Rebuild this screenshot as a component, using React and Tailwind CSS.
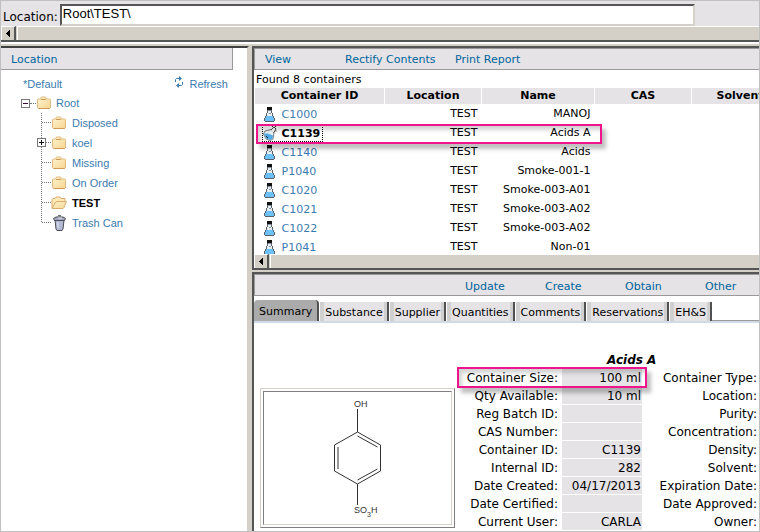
import React from "react";

const VERDANA = "font-['DejaVu_Sans',sans-serif]";

function Flask() {
  return (
    <svg width="12" height="15" viewBox="0 0 12 15" shapeRendering="crispEdges" aria-hidden="true" className="shrink-0">
      <path d="M3 0h5v3h-5z" fill="#111" />
      <path d="M4 3h3v4h1v2h1v2h-7v-2h1v-2h1z" fill="#e4eef4" />
      <path d="M2 9h7v2h1v3h-9v-3h1z" fill="#6cc1fa" />
      <path d="M3 3h1v3h-1zM7 3h1v3h-1zM2 6h1v3h-1zM8 6h1v3h-1zM1 9h1v2h-1zM9 9h1v2h-1zM0 11h1v3h-1zM10 11h1v3h-1zM1 14h9v1h-9z" fill="#5b6068" />
      <path d="M4 3h3v1h-3zM5 6h2v1h-2z" fill="#8a949c" />
    </svg>
  );
}

function OpenFlask() {
  return (
    <svg width="14" height="15" viewBox="0 0 14 15" aria-hidden="true" className="shrink-0">
      <path d="M8 3.500 2 5 .5 8 3 13l4 1.500 3-1.500 1-6z" fill="#e8f0f4" stroke="#777" />
      <path d="M1 7.500h4l5 2-.5 3L7 14l-4-1.500z" fill="#50ace8" />
      <path d="m8 4 3-3 2 2-2.500 4" fill="#fff" stroke="#444" />
      <path d="m9 1 1-1M12 .5h1M13 4.500v1M5 12l-2-2" stroke="#222" />
    </svg>
  );
}

function Folder({ open }) {
  return (
    <svg width="16" height="14" viewBox="0 0 16 14" aria-hidden="true" className="shrink-0">
      <defs>
        <linearGradient id="folderFill" x2="1" y2="1">
          <stop offset="0" stopColor="#fff4cf" />
          <stop offset="1" stopColor="#f6d592" />
        </linearGradient>
      </defs>
      {open ? (
        <>
          <path d="M1 12V3.500l1-1h2l1-1.500h4l1 1.500h4v3.500" fill="#ffe9b6" stroke="#d9ad70" />
          <path d="M1 12.500 4 7l2-1.500h9.500l-2.500 6-1 1z" fill="url(#folderFill)" stroke="#d9ad70" />
        </>
      ) : (
        <>
          <path d="M1.500 11.500v-8l1-.5h2l1-2h4l1 2h3l1 .5v8l-1 1h-11z" fill="url(#folderFill)" stroke="#dfb981" />
          <path d="M5 3.500h5M2.500 12.500h11l1-1" stroke="#cf9a52" fill="none" />
        </>
      )}
    </svg>
  );
}

function Trash() {
  return (
    <svg width="16" height="16" viewBox="0 0 16 16" aria-hidden="true" className="shrink-0">
      <path d="M4 5h9l-1 9-1 1.500H6L5 14z" fill="#b4b9d4" stroke="#4a4a52" />
      <path d="M2.500 3.500 5 2h7l2.500 1.500-1 2h-10z" fill="#a3a9c4" stroke="#4a4a52" />
      <path d="M7 .8h3" stroke="#333" />
      <path d="M7 3h4M7 7v6" stroke="#e4e7f4" />
    </svg>
  );
}

function Expander({ open }) {
  return (
    <svg width="9" height="9" viewBox="0 0 9 9" shapeRendering="crispEdges" aria-hidden="true">
      <path d="M0 0h9v9h-9z" fill="#777" />
      <path d="M1 1h7v7h-7z" fill="#fff" />
      <path d={open ? "M2 4h5v1h-5z" : "M2 4h5v1h-5zM4 2h1v5h-1z"} fill="#3b0a3b" />
    </svg>
  );
}

function Dots({ last, expandable }) {
  return (
    <svg width="14" height="20" viewBox="0 0 14 20" shapeRendering="crispEdges" aria-hidden="true" className="shrink-0">
      <path d={last ? "M4.500 0v10" : "M4.500 0v20"} stroke="#777" strokeDasharray="1 1" />
      <path d="M5 9.500h9" stroke="#777" strokeDasharray="1 1" />
      {expandable && (
        <g>
          <path d="M0 5h9v9h-9z" fill="#777" />
          <path d="M1 6h7v7h-7z" fill="#fff" />
          <path d="M2 9h5v1h-5zM4 7h1v5h-1z" fill="#111" />
        </g>
      )}
    </svg>
  );
}

function ScrollBar() {
  return (
    <div className="flex h-[14px] shrink-0 bg-[#d4d0c8]">
      <button aria-label="Scroll left" className="flex w-[15px] items-center justify-center border border-r-2 border-b-0 border-white border-r-[#555]">
        <svg width="4" height="7" viewBox="0 0 4 7" aria-hidden="true" shapeRendering="crispEdges">
          <path d="M4 0v7L0 3.500z" fill="#000" />
        </svg>
      </button>
      <div className="ml-px flex-1 border-t border-l border-white" />
    </div>
  );
}

const folders = [
  { name: "Disposed" },
  { name: "koel", expandable: true },
  { name: "Missing" },
  { name: "On Order" },
  { name: "TEST", open: true },
  { name: "Trash Can", trash: true },
];

const rows = [
  ["C1000", "MANOJ"],
  ["C1139", "Acids A"],
  ["C1140", "Acids"],
  ["P1040", "Smoke-001-1"],
  ["C1020", "Smoke-003-A01"],
  ["C1021", "Smoke-003-A02"],
  ["C1022", "Smoke-003-A02"],
  ["P1041", "Non-01"],
];

const tabs = ["Substance", "Supplier", "Quantities", "Comments", "Reservations", "EH&S"];

const details = [
  ["Container Size:", "100 ml", "Container Type:"],
  ["Qty Available:", "10 ml", "Location:"],
  ["Reg Batch ID:", "", "Purity:"],
  ["CAS Number:", "", "Concentration:"],
  ["Container ID:", "C1139", "Density:"],
  ["Internal ID:", "282", "Solvent:"],
  ["Date Created:", "04/17/2013", "Expiration Date:"],
  ["Date Certified:", "", "Date Approved:"],
  ["Current User:", "CARLA", "Owner:"],
];

const HIGHLIGHT = "pointer-events-none absolute border-2 border-[#f0148c] shadow-[4px_5px_4px_rgba(0,0,0,0.25),inset_3px_4px_4px_rgba(0,0,0,0.18)]";

function Tree() {
  return (
    <aside className="flex w-[248px] shrink-0 flex-col border-t-2 border-t-[#404040] border-r-2 border-r-[#d4d0c8] bg-white font-['Liberation_Sans',Arial,sans-serif] text-[11px] text-[#3b7bb0]">
      <h2 className={`${VERDANA} mr-[14px] h-[22px] border-r border-b border-[#999] bg-[#e5e3e6] pl-[10px] leading-[24px] text-[#00639c]`}>Location</h2>
      <div className="flex h-[23px] items-end justify-between pr-[19px] pl-[22px] leading-[18px]">
        <a href="#default">*Default</a>
        <a href="#refresh" className="flex items-center gap-[5px]">
          <svg width="10" height="12" viewBox="0 0 10 12" aria-hidden="true" className="mb-1" fill="none" stroke="#3b7bb0">
            <path d="M1.500 6V3.500l1-1H6M8.500 6v2.500l-1 1H4" />
            <path d="m5 0 3 2.500L5 5zM5 7 2 9.500 5 12z" fill="#3b7bb0" stroke="none" />
          </svg>
          Refresh
        </a>
      </div>
      <ul className="pl-5">
        <li className="flex h-5 items-center">
          <Expander open />
          <span className="w-[6px] border-t border-dotted border-[#777]" />
          <Folder />
          <a href="#root" className="pl-1">Root</a>
        </li>
        {folders.map((f) => (
          <li key={f.name} className="flex h-5 items-center pl-4">
            <Dots last={f.trash} expandable={f.expandable} />
            {f.trash ? <Trash /> : <Folder open={f.open} />}
            <a href={"#" + f.name} className={f.open ? "pl-[5px] font-bold text-black" : "pl-[5px]"}>{f.name}</a>
          </li>
        ))}
      </ul>
    </aside>
  );
}

function Containers() {
  return (
    <section className="flex h-[224px] shrink-0 flex-col overflow-hidden border-t-2 border-b-2 border-l-2 border-[#555] bg-white">
      <nav className="flex h-[22px] shrink-0 items-center border border-r-0 border-[#999] bg-[#e5e3e6] pt-[3px] pl-[10px] text-[#00639c]">
        <a href="#view" className="w-[80px]">View</a>
        <a href="#rectify" className="w-[110px] whitespace-nowrap">Rectify Contents</a>
        <a href="#print">Print Report</a>
      </nav>
      <p className="h-[18px] shrink-0 pl-[2px] leading-[19px]">Found 8 containers</p>
      <div className="relative min-h-0 flex-1 overflow-hidden">
        <table className="w-[630px] table-fixed">
          <thead>
            <tr className="h-4 leading-4">
              <th className="w-[130px] border-r border-l border-white bg-[#e5e3e6] p-0">Container ID</th>
              <th className="w-[97px] border-r border-white bg-[#e5e3e6] p-0">Location</th>
              <th className="w-[113px] border-r border-white bg-[#e5e3e6] p-0">Name</th>
              <th className="w-[97px] border-r border-white bg-[#e5e3e6] p-0">CAS</th>
              <th className="w-[97px] border-r border-white bg-[#e5e3e6] p-0">Solvent</th>
              <th className="bg-[#e5e3e6] p-0" />
            </tr>
          </thead>
          <tbody>
            {rows.map(([id, name], i) => {
              const selected = i === 1;
              return (
                <tr key={id} className="h-[19px] leading-[19px]">
                  <td className="p-0 pt-px pl-[8px]">
                    <a href={"#" + id} className={selected ? "flex h-[16px] w-[59px] items-center gap-[5px] font-bold outline-1 outline-dotted outline-black" : "flex h-[18px] w-[80px] items-center gap-[6px] pl-px text-[#3b7bb0]"}>
                      {selected ? <OpenFlask /> : <Flask />}
                      {id}
                    </a>
                  </td>
                  <td className="p-0 pt-px pr-[4px] text-right leading-[18px]">TEST</td>
                  <td className="p-0 pt-px pr-[4px] text-right leading-[18px] whitespace-nowrap">{name}</td>
                  <td />
                  <td />
                  <td />
                </tr>
              );
            })}
          </tbody>
        </table>
        <div className={`${HIGHLIGHT} top-[36px] left-[2px] h-[20px] w-[346px]`} />
      </div>
      <ScrollBar />
    </section>
  );
}

function Structure() {
  return (
    <figure className="mt-[37px] h-[140px] w-[195px] shrink-0 border border-t-[#d4d0c8] border-r-[#808080] border-b-[#808080] border-l-[#d4d0c8] p-[2px]">
      <div className="flex h-full justify-center border border-t-[#808080] border-r-[#d4d0c8] border-b-[#d4d0c8] border-l-[#808080]">
        <svg width="100" height="130" viewBox="0 0 100 130" role="img" aria-label="4-hydroxybenzenesulfonic acid" fontFamily="'Liberation Sans', Arial, sans-serif" fontSize="9" fill="#333">
          <g stroke="#333" fill="none">
            <path d="M49.500 17v23l23 13v26l-23 13-23-13V53l23-13M49.500 92v21" />
            <path d="m49.500 44 20 11M69.500 77l-20 11M30 55v22" />
          </g>
          <text x="46" y="15">OH</text>
          <text x="46" y="121">SO</text>
          <text x="59" y="125" fontSize="7">3</text>
          <text x="63" y="121">H</text>
        </svg>
      </div>
    </figure>
  );
}

function Details() {
  return (
    <section className="flex min-h-0 flex-1 flex-col overflow-hidden border-t-2 border-l-2 border-[#555] bg-white">
      <nav className="flex h-[22px] shrink-0 items-center border border-r-0 border-[#999] bg-[#e5e3e6] pt-[5px] pl-[210px] text-[#00639c]">
        <a href="#update" className="w-[80px]">Update</a>
        <a href="#create" className="w-[80px]">Create</a>
        <a href="#obtain" className="w-[80px]">Obtain</a>
        <a href="#other">Other</a>
      </nav>
      <div role="tablist" className="flex h-[27px] shrink-0 items-end border-b-2 border-[#cfdce8]">
        <button role="tab" aria-selected="true" className="h-[21px] rounded-t-sm border-r-2 border-[#505050] bg-[#ababab] px-[5px] pt-[3px]">Summary</button>
        {tabs.map((t) => (
          <button key={t} role="tab" aria-selected="false" className="ml-px h-[19px] border-r-2 border-[#505050]">
            <span className="block h-full border-r-[3px] border-l-4 border-[#d0d0d0] bg-[#e5e3e6] px-px leading-[21px]">{t}</span>
          </button>
        ))}
        <div className="flex-1 self-end border-b border-[#999]" />
      </div>
      <div className="flex shrink-0 pt-[28px] pl-[6px] text-[12px]">
        <Structure />
        <div className="relative min-w-0 flex-1">
          <h3 className="h-[17px] pl-[152px] leading-[18px] font-bold italic">Acids A</h3>
          <table className="w-[303px] table-fixed">
            <tbody>
              {details.map(([label, value, second]) => (
                <tr key={label} className="h-[18px] leading-4">
                  <th className="w-[107px] p-0 pr-[4px] text-right font-normal whitespace-nowrap">{label}</th>
                  <td className="w-[80px] border-y border-white bg-[#e5e3e6] p-0 pr-px text-right">{value}</td>
                  <th className="p-0 pr-px text-right font-normal whitespace-nowrap">{second}</th>
                </tr>
              ))}
            </tbody>
          </table>
          <div className={`${HIGHLIGHT} top-[16px] left-[2px] h-[21px] w-[190px]`} />
        </div>
      </div>
    </section>
  );
}

export default function App() {
  return (
    <main className={`${VERDANA} flex h-screen flex-col overflow-hidden border border-[#c0c0c0] text-[11px] text-black`}>
      <header className="shrink-0 border-b-2 border-[#555] bg-[#e5e3e6]">
        <div className="flex h-[25px] items-end pr-[64px] pl-[2px]">
          <label htmlFor="path" className="pr-[2px] text-[12px] leading-[18px]">Location:</label>
          <input id="path" defaultValue={"Root\\TEST\\"} className="h-[22px] min-w-0 flex-1 border-2 border-t-[#555] border-r-[#d4d0c8] border-b-[#d4d0c8] border-l-[#555] bg-white pb-[3px] pl-px font-['Liberation_Sans',Arial,sans-serif] text-[13px]" />
        </div>
        <ScrollBar />
      </header>
      <div className="flex min-h-0 flex-1 bg-[#d4d0c8]">
        <div className="flex min-w-0 flex-1 border-t-2 border-white pt-[2px]">
          <Tree />
          <div className="ml-[3px] flex min-w-0 flex-1 flex-col gap-[2px]">
            <Containers />
            <Details />
          </div>
        </div>
      </div>
    </main>
  );
}
